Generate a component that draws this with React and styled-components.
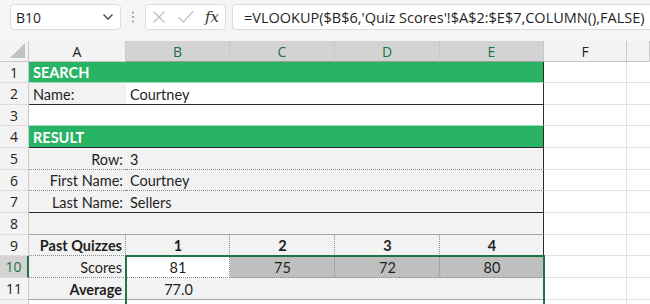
import React from 'react'
import styled, { createGlobalStyle } from 'styled-components'

const GlobalStyle = createGlobalStyle`
  html, body {
    margin: 0;
    padding: 0;
    background: #ffffff;
  }
  * { box-sizing: border-box; }
`;

const GREEN = '#29b365';
const SHADE = '#f2f2f2';
const DARK = '1px solid #2b2b2b';
const DOT = '1px dotted #8a8a8a';
const MINT = '1px solid #9fdcb9';
const GRID = '1px solid #e1e1e1';
const MID = '1px solid #a6a6a6';

const Toolbar = styled.div`
  display: flex;
  align-items: center;
  height: 41px;
  padding: 0 0 7px 10px;
  background: #f5f5f5;
  font-family: "Open Sans", "Noto Sans", sans-serif;
`;

const Box = styled.div`
  display: flex;
  align-items: center;
  height: 26px;
  background: #ffffff;
  border: 1px solid #dcdcdc;
  border-radius: 4px;
`;

const NameBox = styled(Box)`
  width: 111px;
  justify-content: space-between;
  padding: 0 6px 0 5px;
  font-size: 14px;
  color: #1f1f1f;
`;

const Grip = styled.div`
  width: 24px;
  display: flex;
  justify-content: center;
`;

const FxBox = styled(Box)`
  width: 81px;
  padding: 0 0 0 6px;
`;

const Fx = styled.span`
  font-family: "DejaVu Serif", "Liberation Serif", serif;
  font-style: italic;
  font-size: 15px;
  color: #333;
  margin-left: 11px;
`;

const Formula = styled(Box)`
  flex: 1;
  margin-left: 6px;
  padding-left: 11px;
  border-right: none;
  border-radius: 4px 0 0 4px;
  font-size: 14.5px;
  color: #1f1f1f;
  white-space: nowrap;
  overflow: hidden;
`;

const Sheet = styled.div`
  position: relative;
  display: grid;
  grid-template-columns: 29px 97px 104px 105px 105px 104px 83px 1fr;
  grid-template-rows: 21px 21px 22px 21px 22px 22px 21px 22px 22px 21px 22px 22px 21px;
  font-family: "Lato", "Liberation Sans", sans-serif;
  font-size: 14.5px;
  color: #1f1f1f;
`;

const ColHead = styled.div`
  display: flex;
  align-items: center;
  justify-content: center;
  background: ${(p) => (p.$active ? '#d3d3d3' : '#f3f3f3')};
  color: ${(p) => (p.$active ? '#1e7145' : '#222')};
  border-right: 1px solid #c8c8c8;
  border-bottom: 1px solid ${(p) => (p.$active ? '#9a9a9a' : '#c8c8c8')};
  font-family: "Open Sans", "Noto Sans", sans-serif;
  font-size: 14px;
`;

const Corner = styled.div`
  background: #f3f3f3;
  border-right: 1px solid #c8c8c8;
  border-bottom: 1px solid #c8c8c8;
  display: flex;
  align-items: flex-end;
  justify-content: flex-end;
  padding: 0 3px 3px 0;
`;

const RowHead = styled.div`
  display: flex;
  align-items: center;
  justify-content: center;
  background: ${(p) => (p.$active ? '#d3d3d3' : '#f3f3f3')};
  color: ${(p) => (p.$active ? '#1e7145' : '#222')};
  border-bottom: 1px solid #dcdcdc;
  border-right: ${(p) => (p.$active ? '2px solid #217346' : '1px solid #c8c8c8')};
  font-family: "Open Sans", "Noto Sans", sans-serif;
  font-size: 14px;
`;

const Cell = styled.div`
  grid-column: span ${(p) => p.$span || 1};
  display: flex;
  align-items: center;
  justify-content: ${(p) =>
    p.$align === 'right' ? 'flex-end' : p.$align === 'center' ? 'center' : 'flex-start'};
  padding: 1px 3px 0 4px;
  background: ${(p) => p.$bg || '#ffffff'};
  color: ${(p) => p.$color || '#1f1f1f'};
  font-weight: ${(p) => (p.$bold ? 700 : 400)};
  border-bottom: ${(p) => p.$bb || GRID};
  border-right: ${(p) => p.$br || 'none'};
  white-space: nowrap;
  overflow: hidden;
`;

const Selection = styled.div`
  position: absolute;
  grid-column: 3 / 7;
  grid-row: 11;
  inset: -1px -1px -1px -1px;
  border: 2px solid #217346;
  pointer-events: none;
  &::after {
    content: '';
    position: absolute;
    right: -4px;
    bottom: -4px;
    width: 6px;
    height: 6px;
    background: #217346;
    border: 1px solid #ffffff;
  }
`;

const Chevron = () => (
  <svg width="12" height="8" viewBox="0 0 12 8">
    <path d="M1.5 1.5 L6 6 L10.5 1.5" fill="none" stroke="#444" strokeWidth="1.3" />
  </svg>
)

const Dots = () => (
  <svg width="4" height="12" viewBox="0 0 4 12">
    <circle cx="2" cy="1.5" r="1.1" fill="#9a9a9a" />
    <circle cx="2" cy="6" r="1.1" fill="#9a9a9a" />
    <circle cx="2" cy="10.5" r="1.1" fill="#9a9a9a" />
  </svg>
)

const Cross = () => (
  <svg width="14" height="14" viewBox="0 0 14 14">
    <path d="M1.5 1.5 L12.5 12.5 M12.5 1.5 L1.5 12.5" stroke="#bdbdbd" strokeWidth="1.2" />
  </svg>
)

const Check = () => (
  <svg width="16" height="14" viewBox="0 0 16 14" style={{ marginLeft: 12 }}>
    <path d="M1 7.5 L5.5 12 L15 1.5" fill="none" stroke="#bdbdbd" strokeWidth="1.2" />
  </svg>
)

const Triangle = () => (
  <svg width="15" height="15" viewBox="0 0 15 15">
    <polygon points="15,0 15,15 0,15" fill="#c2c2c2" />
  </svg>
)

const columns = ['A', 'B', 'C', 'D', 'E', 'F', '']

// each row: list of cells for A..E; F and G are plain gridline cells
const rows = [
  [{ span: 5, text: 'SEARCH', bg: GREEN, color: '#fff', bold: true, bb: MINT, br: DARK }],
  [
    { text: 'Name:', bg: SHADE, bb: DARK },
    { span: 4, text: 'Courtney', bb: DARK, br: DARK },
  ],
  [{ span: 5, text: '', bb: MINT, br: DARK }],
  [{ span: 5, text: 'RESULT', bg: GREEN, color: '#fff', bold: true, bb: DARK, br: DARK }],
  [
    { text: 'Row:', align: 'right', bg: SHADE, bb: DOT },
    { span: 4, text: '3', bg: SHADE, bb: DOT, br: DARK },
  ],
  [
    { text: 'First Name:', align: 'right', bg: SHADE, bb: DOT },
    { span: 4, text: 'Courtney', bg: SHADE, bb: DOT, br: DARK },
  ],
  [
    { text: 'Last Name:', align: 'right', bg: SHADE, bb: DARK },
    { span: 4, text: 'Sellers', bg: SHADE, bb: DARK, br: DARK },
  ],
  [{ span: 5, text: '', bg: SHADE, bb: MID, br: DARK }],
  [
    { text: 'Past Quizzes', align: 'right', bold: true, bg: SHADE, bb: DOT, br: DOT },
    { text: '1', align: 'center', bold: true, bg: SHADE, bb: DOT, br: DOT },
    { text: '2', align: 'center', bold: true, bg: SHADE, bb: DOT, br: DOT },
    { text: '3', align: 'center', bold: true, bg: SHADE, bb: DOT, br: DOT },
    { text: '4', align: 'center', bold: true, bg: SHADE, bb: DOT, br: DARK },
  ],
  [
    { text: 'Scores', align: 'right', bg: SHADE, bb: DOT, br: DOT },
    { text: '81', align: 'center', bg: '#ffffff', bb: DOT, br: DOT },
    { text: '75', align: 'center', bg: '#bfbfbf', bb: DOT, br: DOT },
    { text: '72', align: 'center', bg: '#bfbfbf', bb: DOT, br: DOT },
    { text: '80', align: 'center', bg: '#bfbfbf', bb: DOT, br: DARK },
  ],
  [
    { text: 'Average', align: 'right', bold: true, bg: SHADE, bb: MID, br: DOT },
    { text: '77.0', align: 'center', bg: SHADE, bb: MID },
    { span: 3, text: '', bg: SHADE, bb: MID, br: DARK },
  ],
]

const App = () => {
  return (
    <>
      <GlobalStyle />
      <Toolbar>
        <NameBox>
          <span>B10</span>
          <Chevron />
        </NameBox>
        <Grip>
          <Dots />
        </Grip>
        <FxBox>
          <Cross />
          <Check />
          <Fx>fx</Fx>
        </FxBox>
        <Formula>=VLOOKUP($B$6,'Quiz Scores'!$A$2:$E$7,COLUMN(),FALSE)</Formula>
      </Toolbar>
      <Sheet>
        <Corner>
          <Triangle />
        </Corner>
        {columns.map((c, i) => (
          <ColHead key={i} $active={i >= 1 && i <= 4}>
            {c}
          </ColHead>
        ))}
        {rows.map((cells, r) => (
          <React.Fragment key={r}>
            <RowHead $active={r === 9}>{r + 1}</RowHead>
            {cells.map((c, i) => (
              <Cell
                key={i}
                $span={c.span}
                $align={c.align}
                $bg={c.bg}
                $color={c.color}
                $bold={c.bold}
                $bb={c.bb}
                $br={c.br}
              >
                {c.text}
              </Cell>
            ))}
            <Cell $br={GRID} />
            <Cell />
          </React.Fragment>
        ))}
        <RowHead />
        <Cell $span={5} $br={DARK} />
        <Cell $br={GRID} />
        <Cell />
        <Selection />
      </Sheet>
    </>
  )
}

export default App
